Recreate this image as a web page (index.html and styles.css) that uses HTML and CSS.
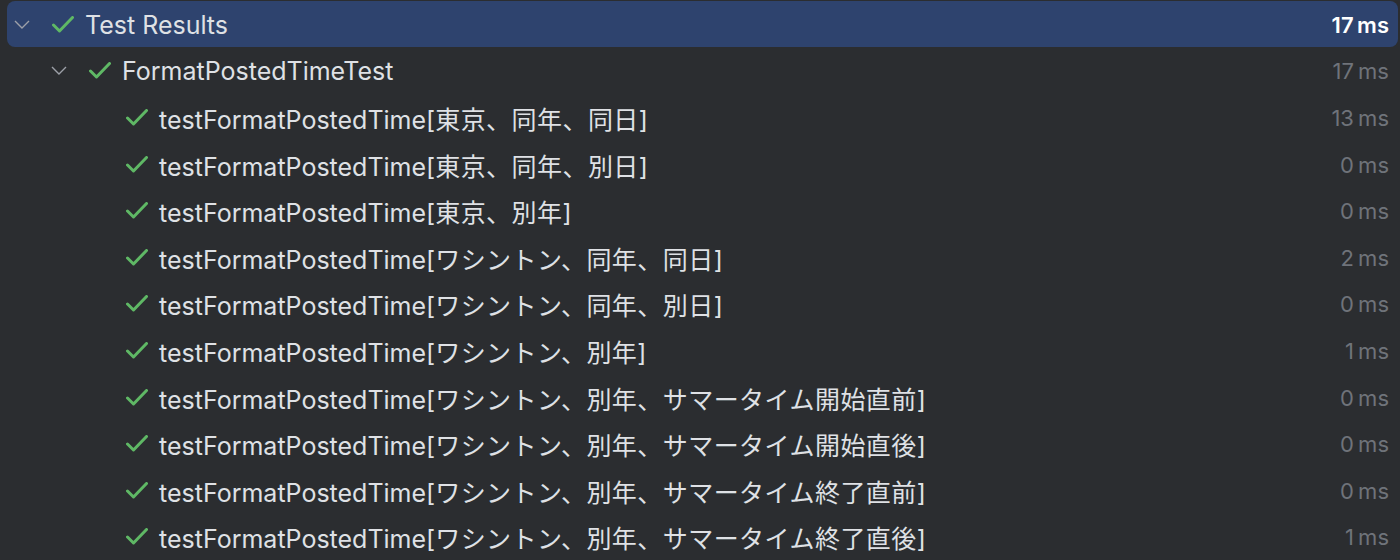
FILE: index.html
```html
<!DOCTYPE html>
<html>
<head>
<meta charset="utf-8">
<link rel="stylesheet" href="styles.css">
</head>
<body>
<div class="tree">
  <div class="row selected lvl0">
    <svg class="chev" viewBox="0 0 16 9"><path d="M1 1 L8 8 L15 1"/></svg>
    <svg class="check" viewBox="0 0 22 17"><path d="M1.5 9 L7.5 15 L20.5 1.5"/></svg>
    <span class="name">Test Results</span>
    <span class="time">17 ms</span>
  </div>
  <div class="row lvl1">
    <svg class="chev" viewBox="0 0 16 9"><path d="M1 1 L8 8 L15 1"/></svg>
    <svg class="check" viewBox="0 0 22 17"><path d="M1.5 9 L7.5 15 L20.5 1.5"/></svg>
    <span class="name">FormatPostedTimeTest</span>
    <span class="time">17 ms</span>
  </div>
  <div class="row lvl2">
    <svg class="check" viewBox="0 0 22 17"><path d="M1.5 9 L7.5 15 L20.5 1.5"/></svg>
    <span class="name">testFormatPostedTime[<span class="jp">東京、同年、同日</span>]</span>
    <span class="time">13 ms</span>
  </div>
  <div class="row lvl2">
    <svg class="check" viewBox="0 0 22 17"><path d="M1.5 9 L7.5 15 L20.5 1.5"/></svg>
    <span class="name">testFormatPostedTime[<span class="jp">東京、同年、別日</span>]</span>
    <span class="time">0 ms</span>
  </div>
  <div class="row lvl2">
    <svg class="check" viewBox="0 0 22 17"><path d="M1.5 9 L7.5 15 L20.5 1.5"/></svg>
    <span class="name">testFormatPostedTime[<span class="jp">東京、別年</span>]</span>
    <span class="time">0 ms</span>
  </div>
  <div class="row lvl2">
    <svg class="check" viewBox="0 0 22 17"><path d="M1.5 9 L7.5 15 L20.5 1.5"/></svg>
    <span class="name">testFormatPostedTime[<span class="jp">ワシントン、同年、同日</span>]</span>
    <span class="time">2 ms</span>
  </div>
  <div class="row lvl2">
    <svg class="check" viewBox="0 0 22 17"><path d="M1.5 9 L7.5 15 L20.5 1.5"/></svg>
    <span class="name">testFormatPostedTime[<span class="jp">ワシントン、同年、別日</span>]</span>
    <span class="time">0 ms</span>
  </div>
  <div class="row lvl2">
    <svg class="check" viewBox="0 0 22 17"><path d="M1.5 9 L7.5 15 L20.5 1.5"/></svg>
    <span class="name">testFormatPostedTime[<span class="jp">ワシントン、別年</span>]</span>
    <span class="time">1 ms</span>
  </div>
  <div class="row lvl2">
    <svg class="check" viewBox="0 0 22 17"><path d="M1.5 9 L7.5 15 L20.5 1.5"/></svg>
    <span class="name">testFormatPostedTime[<span class="jp">ワシントン、別年、サマータイム開始直前</span>]</span>
    <span class="time">0 ms</span>
  </div>
  <div class="row lvl2">
    <svg class="check" viewBox="0 0 22 17"><path d="M1.5 9 L7.5 15 L20.5 1.5"/></svg>
    <span class="name">testFormatPostedTime[<span class="jp">ワシントン、別年、サマータイム開始直後</span>]</span>
    <span class="time">0 ms</span>
  </div>
  <div class="row lvl2">
    <svg class="check" viewBox="0 0 22 17"><path d="M1.5 9 L7.5 15 L20.5 1.5"/></svg>
    <span class="name">testFormatPostedTime[<span class="jp">ワシントン、別年、サマータイム終了直前</span>]</span>
    <span class="time">0 ms</span>
  </div>
  <div class="row lvl2">
    <svg class="check" viewBox="0 0 22 17"><path d="M1.5 9 L7.5 15 L20.5 1.5"/></svg>
    <span class="name">testFormatPostedTime[<span class="jp">ワシントン、別年、サマータイム終了直後</span>]</span>
    <span class="time">1 ms</span>
  </div>
</div>
</body>
</html>
```
FILE: styles.css
```css
html, body {
  margin: 0;
  padding: 0;
  background: #2b2d30;
  overflow: hidden;
}
body {
  font-family: Inter, "Noto Sans CJK JP", sans-serif;
  font-size: 25px;
  color: #dfe1e5;
}
.tree {
  display: flex;
  flex-direction: column;
  padding: 1px 2px 0 7px;
}
.row {
  display: flex;
  align-items: center;
  height: 46.6px;
  flex: none;
  border-radius: 8px;
  padding-right: 9px;
  white-space: nowrap;
}
.row.selected {
  background: #2e436e;
  height: 46px;
  margin-bottom: 0.6px;
}
.lvl0 { padding-left: 7px; }
.lvl1 { padding-left: 44px; }
.lvl2 { padding-left: 119px; }
.chev {
  width: 16px;
  height: 9px;
  flex: none;
  fill: none;
  stroke: #9da0a8;
  stroke-width: 1.4;
  margin-right: 22px;
}
.check {
  width: 22px;
  height: 17px;
  flex: none;
  fill: none;
  stroke: #5fb865;
  stroke-width: 3;
  stroke-linecap: round;
  stroke-linejoin: round;
  margin-right: 11px;
}
.lvl2 .check {
  margin-right: 11px;
}
.name {
  flex: 1;
  padding-top: 1px;
}
.jp {
  letter-spacing: 0.45px;
}
.time {
  color: #6f737a;
  font-size: 22px;
  padding-top: 1px;
  word-spacing: -2px;
}
.selected .time {
  color: #ffffff;
  font-weight: 600;
}
```
